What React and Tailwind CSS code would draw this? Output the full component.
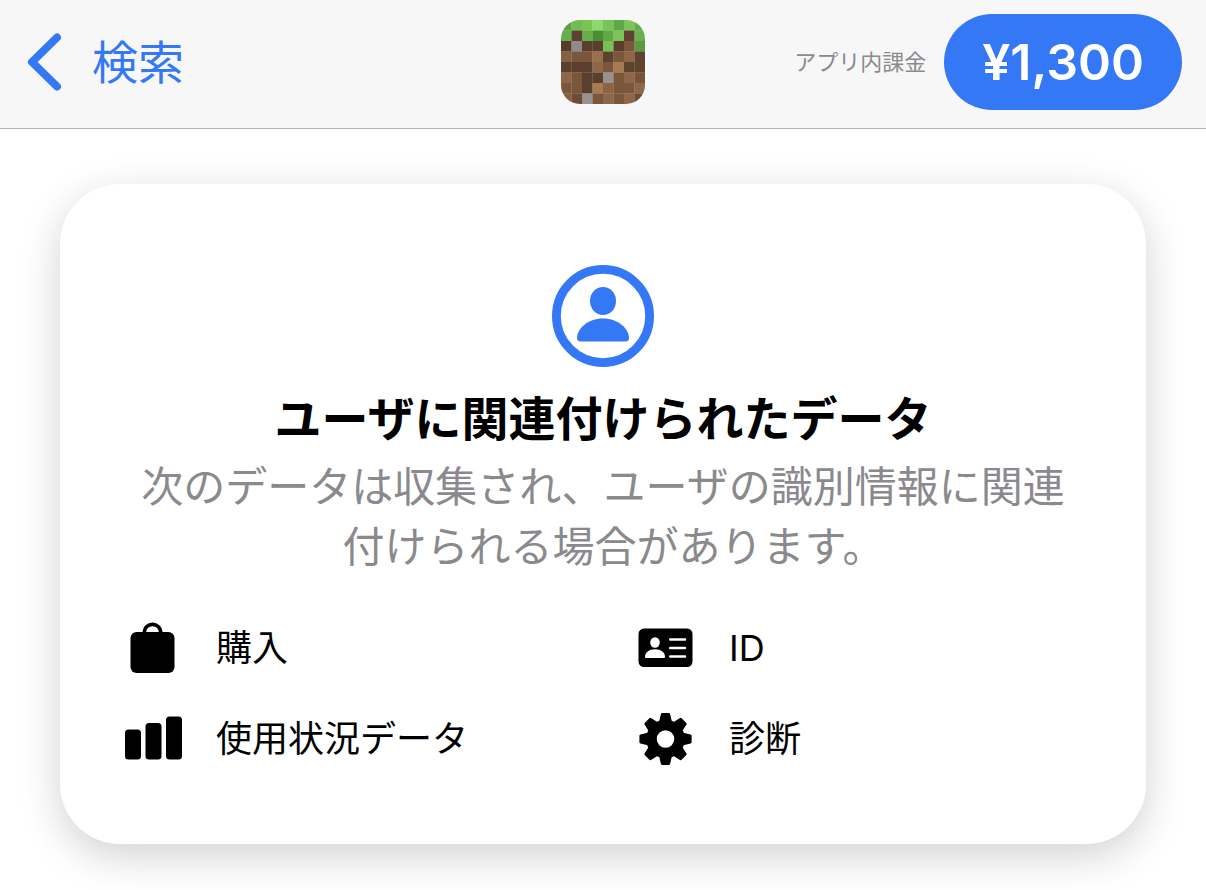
import React from 'react';

const BLOCKS = [
  ['#5f9f45', '#72bd50', '#7ac455', '#8fd870', '#78c458', '#5fa848', '#7bc457', '#66ab49'],
  ['#66ae49', '#5e4130', '#66ae49', '#4d8c36', '#63a846', '#7bc457', '#5e4130', '#6ab04c'],
  ['#563c2a', '#8f8b89', '#5a3f2d', '#5a3f2d', '#76c254', '#5a3f2d', '#7a563b', '#5b9a42'],
  ['#87613f', '#7a563b', '#7a563b', '#996f4e', '#5e4130', '#7a563b', '#8d6748', '#5e4130'],
  ['#5a3f2d', '#5a3f2d', '#5a3f2d', '#8d6748', '#7a563b', '#a67a54', '#5e432f', '#5e432f'],
  ['#8d6748', '#7a563b', '#5a3f2d', '#5a3f2d', '#98928f', '#7a563b', '#8d6748', '#765339'],
  ['#7a563b', '#7a563b', '#5a3f2d', '#a67a54', '#8a6445', '#7a563b', '#7a563b', '#8d6748'],
  ['#87613f', '#6b4c36', '#98928f', '#7a563b', '#8d6748', '#7a563b', '#8d6748', '#6b4c36'],
];

const AppIcon = () => (
  <svg className="size-[84px] rounded-[19px]" viewBox="0 0 8 8" role="img" aria-label="Minecraft">
    {BLOCKS.map((row, y) =>
      row.map((color, x) => (
        <rect key={`${x}-${y}`} x={x} y={y} width="1.02" height="1.02" fill={color} />
      ))
    )}
  </svg>
);

const BackIcon = () => (
  <svg className="h-[58px] w-[38px]" viewBox="-2 0 38 58" fill="none" aria-hidden="true">
    <path d="M31 4.5 6 29 31 53.5" stroke="currentColor" strokeWidth="8" strokeLinecap="round" strokeLinejoin="round" />
  </svg>
);

const UserCircleIcon = () => (
  <svg className="size-[102px] text-[#3478f6]" viewBox="0 0 102 102" fill="none" aria-hidden="true">
    <circle cx="51" cy="51" r="46.6" stroke="currentColor" strokeWidth="8.8" />
    <ellipse cx="51" cy="36" rx="13" ry="14" fill="currentColor" />
    <path
      d="M25 73C25 64 35.500 53.500 51 53.500S77 64 77 73C77 75.500 75.500 76.500 73 76.500H29C26.500 76.500 25 75.500 25 73Z"
      fill="currentColor"
    />
  </svg>
);

const BagIcon = () => (
  <svg className="size-16" viewBox="0 0 64 64" aria-hidden="true">
    <path d="M24.300 17C24.300 5.500 40.700 5.500 40.700 17" fill="none" stroke="currentColor" strokeWidth="3.600" />
    <rect x="10.500" y="16" width="44" height="41" rx="6" fill="currentColor" />
  </svg>
);

const BarsIcon = () => (
  <svg className="size-16" viewBox="0 0 64 64" fill="currentColor" aria-hidden="true">
    <rect x="5" y="22.500" width="16" height="30" rx="3.500" />
    <rect x="25.500" y="16" width="16" height="36.500" rx="3.500" />
    <rect x="46" y="9.500" width="16" height="43" rx="3.500" />
  </svg>
);

const CardIcon = () => (
  <svg className="size-16" viewBox="0 0 64 64" aria-hidden="true">
    <rect x="5.500" y="12.500" width="54" height="38.500" rx="5.500" fill="currentColor" />
    <g fill="white">
      <ellipse cx="22" cy="26.500" rx="4.800" ry="5.200" />
      <path d="M12 41C12 36.500 16 33.300 22 33.300S32 36.500 32 41Q32 42 31 42H13Q12 42 12 41Z" />
    </g>
    <path d="M37.300 23.500H52M37.300 32H52M37.300 40.500H52" stroke="white" strokeWidth="2.600" strokeLinecap="round" />
  </svg>
);

const GearIcon = () => (
  <svg className="size-16" viewBox="0 0 64 64" aria-hidden="true">
    <circle cx="32.500" cy="32" r="14" fill="none" stroke="currentColor" strokeWidth="10.500" />
    {[0, 45, 90, 135, 180, 225, 270, 315].map((angle) => (
      <path
        key={angle}
        d="M27.500 14.500 29.200 7.200H35.800L37.500 14.500Z"
        fill="currentColor"
        stroke="currentColor"
        strokeWidth="2.600"
        strokeLinejoin="round"
        transform={`rotate(${angle} 32.5 32)`}
      />
    ))}
  </svg>
);

const dataTypes = [
  { label: '購入', icon: BagIcon },
  { label: 'ID', icon: CardIcon },
  { label: '使用状況データ', icon: BarsIcon },
  { label: '診断', icon: GearIcon },
];

const App = () => {
  return (
    <div lang="ja" className="min-h-screen bg-white pb-11 font-[Inter,'Noto_Sans_CJK_JP',sans-serif] text-black">
      <header className="grid grid-cols-[1fr_auto_1fr] items-center border-b border-[#b2b2b2] bg-[#f7f7f7] px-6 pt-[14px] pb-[18px]">
        <a href="#search" className="flex items-center gap-[30px] justify-self-start text-[46px] leading-[60px] text-[#3478f6]">
          <BackIcon />
          検索
        </a>
        <AppIcon />
        <div className="flex items-center gap-[18px] justify-self-end">
          <span className="text-[22px] leading-8 text-[#8a8a8e]">アプリ内課金</span>
          <button
            type="button"
            className="h-24 rounded-full bg-[#3478f6] px-[38px] text-[50px] leading-[60px] font-semibold text-white"
          >
            ¥1,300
          </button>
        </div>
      </header>

      <main className="px-[60px] pt-[55px]">
        <section className="rounded-[60px] bg-white px-[60px] pt-[81px] pb-[73px] shadow-[0_12px_40px_rgba(0,0,0,0.18)]">
          <div className="flex flex-col items-center text-center">
            <UserCircleIcon />
            <h1 className="mt-[22px] text-[47px] leading-[60px] font-bold">ユーザに関連付けられたデータ</h1>
            <p className="mt-2 px-4 text-[42px] leading-[60px] text-[#8a8a8e]">
              次のデータは収集され、ユーザの識別情報に関連
              <span className="[font-feature-settings:'halt']">付けられる場合があります。</span>
            </p>
          </div>

          <ul className="mt-[39px] grid grid-cols-2 gap-x-[60px] gap-y-[27px]">
            {dataTypes.map((item) => {
              const Icon = item.icon;
              return (
                <li key={item.label} className="flex items-center gap-8 text-[36px] leading-[60px]">
                  <Icon />
                  {item.label}
                </li>
              );
            })}
          </ul>
        </section>
      </main>
    </div>
  );
};

export default App;
